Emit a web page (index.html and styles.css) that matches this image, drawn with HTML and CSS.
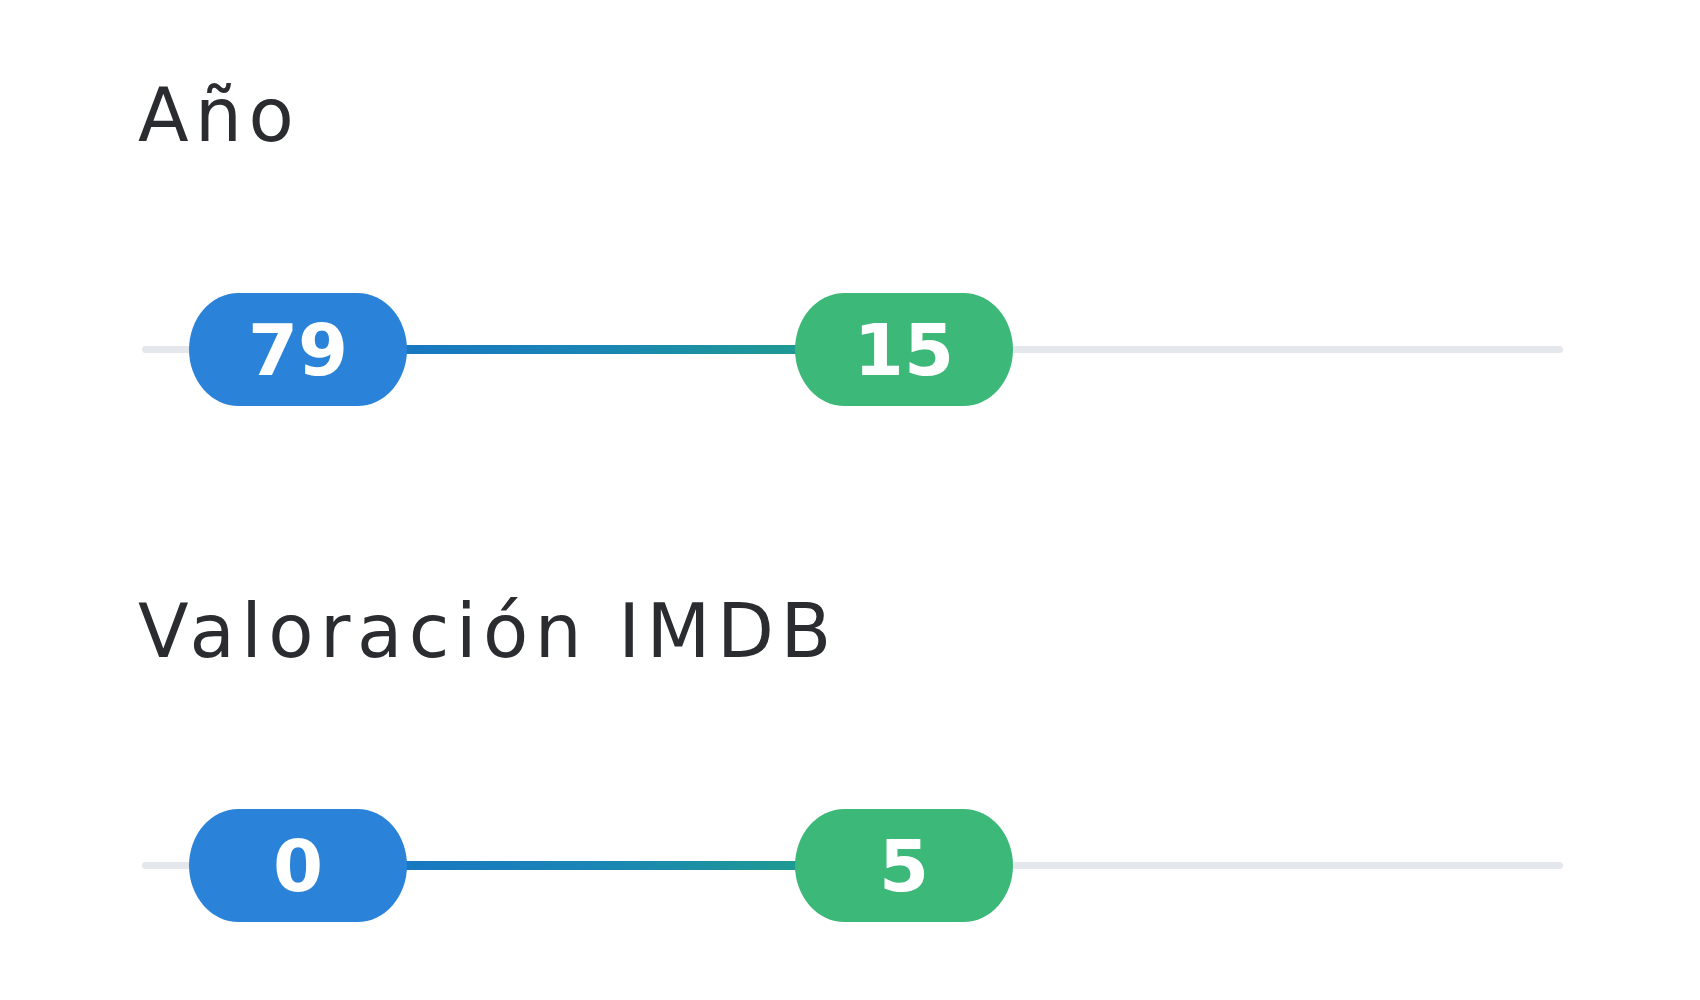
FILE: index.html
```html
<!DOCTYPE html>
<html lang="es">
<head>
<meta charset="utf-8">
<title>Filtros</title>
<link rel="stylesheet" href="styles.css">
</head>
<body>
<div class="filters">
  <section class="group">
    <h2 class="label">Año</h2>
    <div class="slider">
      <div class="track"></div>
      <div class="fill" style="left:11.15%;width:42.65%"></div>
      <div class="pill pill-min" style="left:3.31%">79</div>
      <div class="pill pill-max" style="left:45.95%">15</div>
    </div>
  </section>
  <section class="group group-second">
    <h2 class="label">Valoración IMDB</h2>
    <div class="slider">
      <div class="track"></div>
      <div class="fill" style="left:11.15%;width:42.65%"></div>
      <div class="pill pill-min" style="left:3.31%">0</div>
      <div class="pill pill-max" style="left:45.95%">5</div>
    </div>
  </section>
</div>
</body>
</html>
```
FILE: styles.css
```css
* { box-sizing: border-box; }
html, body { margin: 0; padding: 0; background: #ffffff; }
body { font-family: "DejaVu Sans", Inter, sans-serif; color: #2a2c30; }

.filters {
  padding: 78px 0 0 138px;
  width: 1563px;
  display: flex;
  flex-direction: column;
}

.group { display: flex; flex-direction: column; }
.group-second { margin-top: 188px; }

.label {
  margin: 0;
  font-size: 74px;
  line-height: 74px;
  font-weight: 400;
  letter-spacing: 6.5px;
}

.slider {
  position: relative;
  margin-top: 141px;
  margin-left: 4px;
  height: 113px;
}

.track {
  position: absolute;
  left: 0; right: 0;
  top: 53px;
  height: 7px;
  border-radius: 4px;
  background: #e4e7eb;
}

.fill {
  position: absolute;
  top: 52px;
  height: 9px;
  background: linear-gradient(90deg, #1670c8 0%, #1a86b4 50%, #22a57f 100%);
}

.pill {
  position: absolute;
  top: 0;
  width: 218px;
  height: 113px;
  border-radius: 50px / 57px;
  display: flex;
  align-items: center;
  justify-content: center;
  color: #ffffff;
  font-size: 72px;
  font-weight: 700;
  line-height: 1;
}
.pill-min { background: #2a82d9; }
.pill-max { background: #3cb878; }
```
